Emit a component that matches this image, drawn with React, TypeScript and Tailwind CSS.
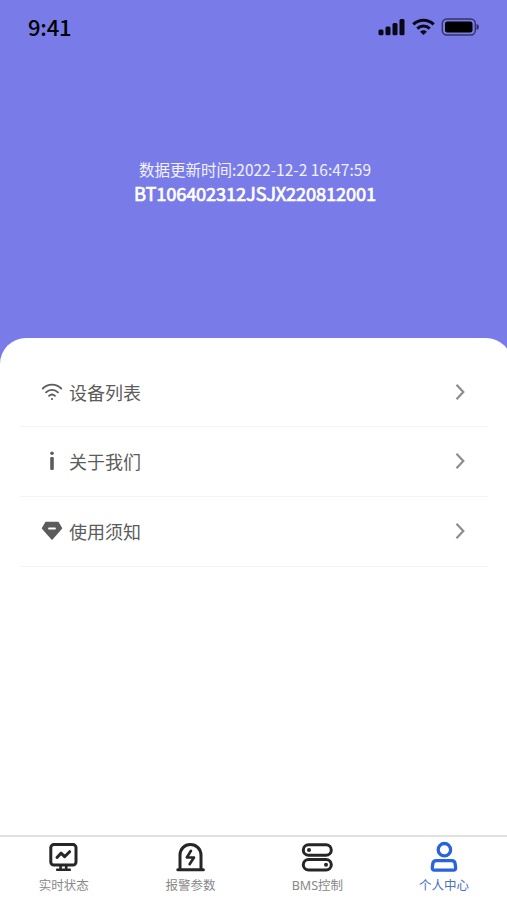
import React from 'react';

const menuItems = [
  { label: '设备列表', icon: <WifiIcon />, height: 'h-[69px]' },
  { label: '关于我们', icon: <InfoIcon />, height: 'h-[70px] pb-0.5' },
  { label: '使用须知', icon: <GemIcon />, height: 'h-[70px] pb-0.5' },
];

const tabs = [
  { label: '实时状态', icon: <MonitorIcon />, active: false },
  { label: '报警参数', icon: <AlarmIcon />, active: false },
  { label: 'BMS控制', icon: <ControlIcon />, active: false },
  { label: '个人中心', icon: <UserIcon />, active: true },
];

function WifiIcon() {
  return (
    <svg width="22" height="18" viewBox="0 0 22 18" fill="none" stroke="#5c5c5c" strokeWidth="1.8" strokeLinecap="round">
      <path d="M1.8 5.5C7 .4 15 .4 20.2 5.5M5 9.4c3.400-3.300 8.600-3.300 12 0M8 12.800c1.800-1.600 4.200-1.600 6 0" />
      <circle cx="11" cy="16" r="1.1" fill="#5c5c5c" stroke="none" />
    </svg>
  );
}

function InfoIcon() {
  return (
    <svg width="22" height="20" viewBox="0 0 22 20" fill="#5c5c5c">
      <circle cx="11" cy="2.2" r="1.8" />
      <rect x="9.2" y="6" width="3.6" height="13" rx="1.2" />
    </svg>
  );
}

function GemIcon() {
  return (
    <svg width="22" height="20" viewBox="0 0 22 20">
      <path d="M5 1.500h12l3.500 5.800L11 18 1.500 7.300z" fill="#5c5c5c" stroke="#5c5c5c" strokeWidth="1.5" strokeLinejoin="round" />
      <path d="M8 7.500h6" stroke="#fff" strokeWidth="1.8" strokeLinecap="round" />
    </svg>
  );
}

function MonitorIcon() {
  return (
    <svg width="32" height="32" viewBox="0 0 32 32" fill="none" stroke="#262626" strokeWidth="3" strokeLinecap="round" strokeLinejoin="round">
      <rect x="3.8" y="3.6" width="25.2" height="20.4" rx="3" />
      <path d="M10 16.500l4-4.300 3.600 3.500 5-5" />
      <path d="M13.600 24.500v3M19.200 24.500v3M10.200 28.800h12.600" strokeWidth="2.6" />
    </svg>
  );
}

function AlarmIcon() {
  return (
    <svg width="32" height="32" viewBox="0 0 32 32" fill="none" stroke="#262626" strokeWidth="3" strokeLinecap="round" strokeLinejoin="round">
      <path d="M6 28V14.300C6 8 10.300 3.600 16.400 3.600S27 8 27 14.300V28M3.800 28.700h25.600" />
      <path d="M17 9.800l-4.200 6.700h7.200L15.600 23.200" strokeWidth="2.6" />
    </svg>
  );
}

function ControlIcon() {
  return (
    <svg width="32" height="32" viewBox="0 0 32 32" fill="none" stroke="#262626" strokeWidth="3">
      <rect x="2.3" y="3.7" width="28" height="10.6" rx="5.3" />
      <rect x="2.3" y="18.5" width="28" height="10.6" rx="5.3" />
      <circle cx="8" cy="9" r="2" fill="#262626" stroke="none" />
      <circle cx="25" cy="23.8" r="2" fill="#262626" stroke="none" />
    </svg>
  );
}

function UserIcon() {
  return (
    <svg width="32" height="32" viewBox="0 0 32 32" fill="none" stroke="#2864dc" strokeWidth="3.3" strokeLinejoin="round">
      <circle cx="16.4" cy="8.7" r="6.2" />
      <path d="M8.300 19.700h15.500c2.200 0 3.200 1.500 3.400 3.500l.4 3.500c.2 1.600-.6 2.500-2 2.500H6.300c-1.400 0-2.200-.9-2-2.500l.4-3.500c.2-2 1.400-3.500 3.600-3.500z" />
    </svg>
  );
}

const StatusBar = () => (
  <div className="flex h-[54px] items-center justify-between pl-7 pr-[27px] text-black">
    <span className="text-[22px] leading-[50px] font-medium tracking-[-0.2px] pb-0.5">9:41</span>
    <div className="flex items-center">
      <svg width="27" height="18" viewBox="0 0 27 18" fill="#080816">
        <rect x="0.5" y="11.5" width="5" height="5.7" rx="1.5" />
        <rect x="7.500" y="8.5" width="5" height="8.7" rx="1.5" />
        <rect x="14.500" y="5" width="5" height="12.2" rx="1.5" />
        <rect x="21.500" y="1" width="5" height="16.2" rx="1.5" />
      </svg>
      <svg className="ml-[7px]" width="23" height="18" viewBox="0 0 23 18" fill="none" stroke="#080816" strokeWidth="3.1">
        <path d="M1.300 6.400c5.800-5.600 14.600-5.600 20.400 0M5.300 10.600c3.600-3.400 8.800-3.400 12.400 0" />
        <path d="M11.500 17l-3.400-3.300c2-1.800 4.800-1.800 6.800 0z" fill="#080816" stroke="none" />
      </svg>
      <svg className="ml-[6px]" width="39" height="18" viewBox="0 0 39 18">
        <rect x="1.3" y="1" width="33" height="16" rx="4.5" fill="none" stroke="#34345f" strokeWidth="1.4" />
        <rect x="4" y="3.5" width="27.5" height="11" rx="2.3" fill="#000" />
        <path d="M35.500 6v6c1.800-.6 2.400-1.800 2.400-3s-.6-2.400-2.400-3z" fill="#30305c" />
      </svg>
    </div>
  </div>
);

export default function App() {
  return (
    <div
      className="flex h-[900px] w-[507px] flex-col overflow-hidden bg-[#797be9]"
      style={{ fontFamily: '"Noto Sans CJK SC", sans-serif' }}
    >
      {/* Header with the device info */}
      <header className="h-[338px] shrink-0">
        <StatusBar />
        <div className="flex flex-col items-center pt-[103px] pl-[3px] text-white">
          <p className="text-[15.5px] leading-6 whitespace-nowrap text-white/90">数据更新时间:2022-12-2 16:47:59</p>
          <p className="text-[18.3px] leading-6 tracking-[-0.16px] whitespace-nowrap [-webkit-text-stroke:0.7px_white]">BT106402312JSJX220812001</p>
        </div>
      </header>

      {/* Menu */}
      <main className="-mr-[5px] flex-1 rounded-t-[26px] bg-white pt-5 pr-[24px] pl-5">
        {menuItems.map((item) => (
          <button
            key={item.label}
            className={`flex w-full items-center border-b border-[#f4f4f4] pr-[23px] pl-[21px] ${item.height}`}
          >
            <span className="flex w-[22px] justify-center">{item.icon}</span>
            <span className="ml-1.5 text-[18px] leading-6 text-[#5c5c5c]">{item.label}</span>
            <svg className="ml-auto" width="10" height="18" viewBox="0 0 10 18" fill="none" stroke="#8c8c8c" strokeWidth="2.2">
              <path d="M1.500 1.800L8.300 9l-6.800 7.200" />
            </svg>
          </button>
        ))}
      </main>

      {/* Bottom tabs */}
      <nav
        className="flex h-[65px] shrink-0 border-t-2 border-[#e1e1e1] bg-white"
        style={{ fontFamily: '"Noto Sans", "Noto Sans CJK SC", sans-serif' }}
      >
        {tabs.map((tab) => (
          <button key={tab.label} className="flex flex-1 flex-col items-center pt-1 pl-px">
            <span className="pr-px">{tab.icon}</span>
            <span className={`text-[12.5px] leading-[26px] whitespace-nowrap ${tab.active ? 'text-[#4672c4]' : 'text-[#888]'}`}>
              {tab.label}
            </span>
          </button>
        ))}
      </nav>
    </div>
  );
}
